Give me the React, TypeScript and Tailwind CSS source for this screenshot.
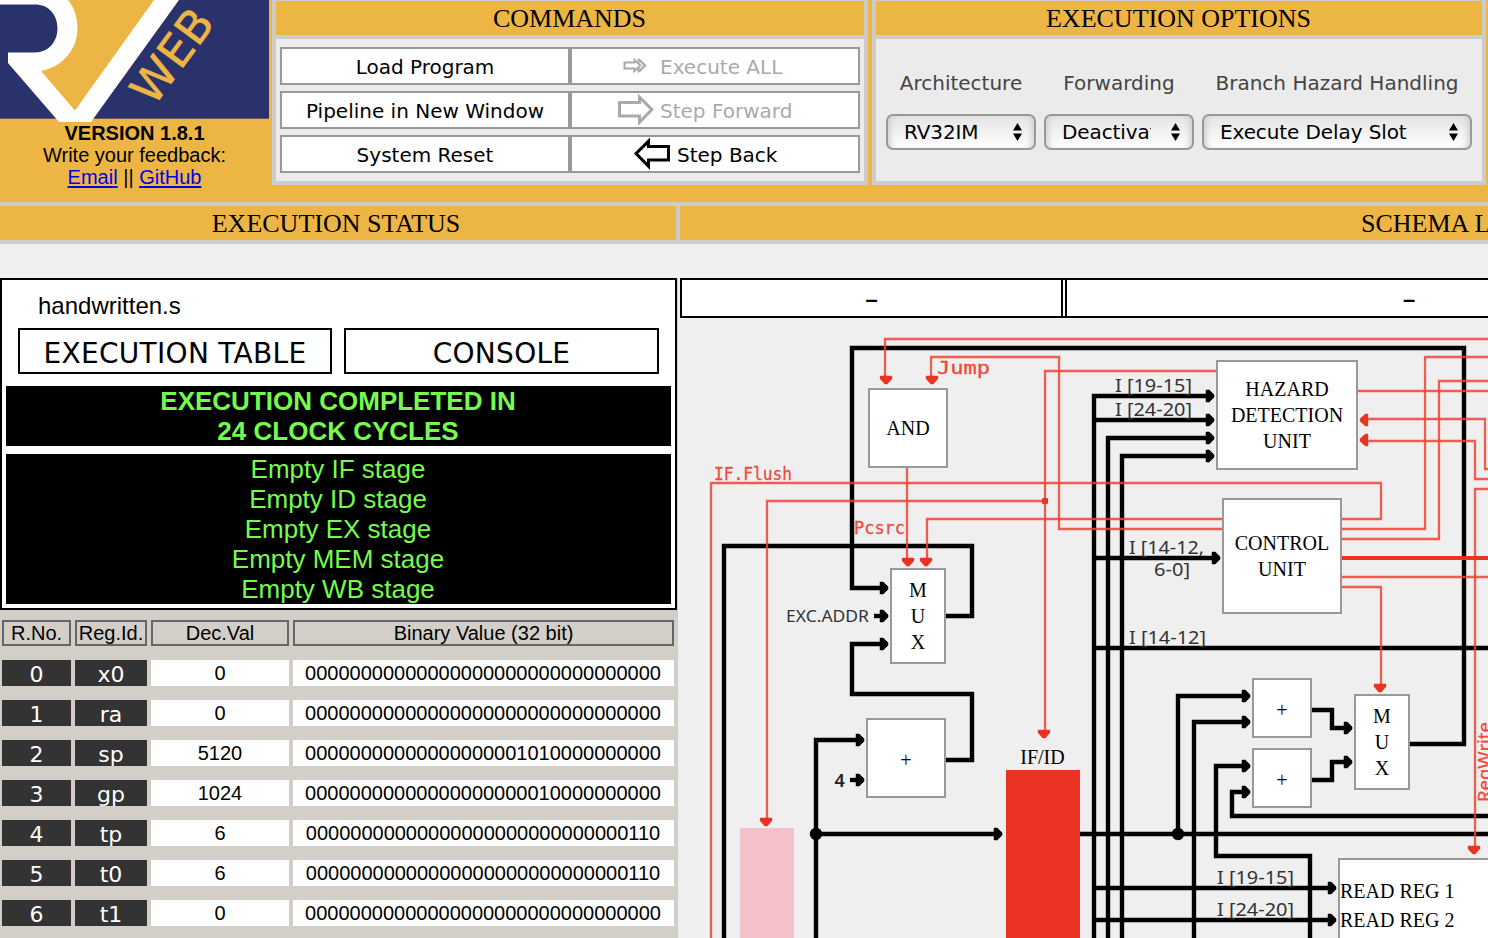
import React from "react";

const VERDANA = "font-['DejaVu_Sans',sans-serif]";
const TIMES = "font-['Liberation_Serif',serif]";

function Logo() {
  return (
    <svg width="270" height="122" viewBox="0 0 270 122" className="block shrink-0">
      <rect x="0" y="0" width="269" height="118.7" fill="#2a326c" />
      <path
        d="M0 0 H179 L91 122 H59 L8 63 V52.500 H35 C49 52.500 57.500 41 57.500 28.500 C57.500 15 49 4.500 35 4.500 H0 Z"
        fill="#fff"
      />
      <path d="M68 0 H154 L75 110.500 L41 71 C62 67 77.500 50 77.500 28 C77.500 17 74 7 68 0 Z" fill="#edb544" />
      <text
        transform="translate(153.500 107.500) rotate(-53.500)"
        fontFamily="DejaVu Sans, sans-serif"
        fontSize="45"
        textLength="105"
        lengthAdjust="spacingAndGlyphs"
        fill="#edb544"
        stroke="#edb544"
        strokeWidth="0.500"
      >
        WEB
      </text>
    </svg>
  );
}

function ArrowOutline({ className }: { className?: string }) {
  return (
    <svg width="37" height="34" viewBox="0 0 37 34" className={`shrink-0 ${className ?? ""}`} fill="currentColor" fillRule="evenodd">
      <path d="M1 8 H21 V0.500 L37 16.500 L21 33 V24.500 H1 Z M4 11 V21.500 H24 V25.500 L32.800 16.500 L24 8 V11 Z" />
    </svg>
  );
}

function ArrowDouble() {
  return (
    <svg width="24" height="16" viewBox="0 0 24 16" className="shrink-0" fill="none" stroke="currentColor" strokeWidth="2">
      <path d="M1.500 4.500 H11.500 V2 L17.500 7.500 L11.500 13 V10.500 H1.500 Z" />
      <path d="M16 1.500 L22 7.500 L16 13.500" strokeWidth="2.400" />
      <path d="M15.500 0.500 V5 M15.500 10 V14.500" strokeWidth="2" />
    </svg>
  );
}

function CommandButton({ children, icon, className }: { children: React.ReactNode; icon?: React.ReactNode; className: string }) {
  return (
    <button className={`flex h-[38px] w-[290px] items-center whitespace-nowrap border-2 border-[#999] bg-white text-[20px] ${VERDANA} ${className}`}>
      {icon}
      <span className="pt-[2px]">{children}</span>
    </button>
  );
}

function PanelTitle({ children }: { children: React.ReactNode }) {
  return (
    <div className={`h-[38px] border-b-4 border-[#ccc] bg-[#edb544] pr-[1px] text-center text-[26px] leading-[36px] ${TIMES}`}>
      {children}
    </div>
  );
}

function OptionSelect({ label, value, width }: { label: string; value: string; width: string }) {
  return (
    <div className={`flex flex-col items-center ${width}`}>
      <span className="whitespace-nowrap text-[20px] leading-[24px] text-[#444]">{label}</span>
      <div className="mt-[19px] flex h-[36px] w-full items-center justify-between rounded-[7px] border-2 border-[#999] bg-linear-to-b from-[#e4e4e4] to-white pl-[16px] pr-[12px] shadow-[inset_6px_0_6px_-4px_#ccc,inset_-6px_0_6px_-4px_#ccc]">
        <span className="min-w-0 flex-1 overflow-hidden whitespace-nowrap text-[20px] leading-[32px] tracking-[-0.1px]">{value}</span>
        <svg width="9" height="18" viewBox="0 0 9 18" className="ml-[20px] shrink-0">
          <path d="M0 7.500 L4.500 0 L9 7.500 Z M0 10.500 L4.500 18 L9 10.500 Z" />
        </svg>
      </div>
    </div>
  );
}

const registers = [
  ["0", "x0", "0", "00000000000000000000000000000000"],
  ["1", "ra", "0", "00000000000000000000000000000000"],
  ["2", "sp", "5120", "00000000000000000001010000000000"],
  ["3", "gp", "1024", "00000000000000000000010000000000"],
  ["4", "tp", "6", "00000000000000000000000000000110"],
  ["5", "t0", "6", "00000000000000000000000000000110"],
  ["6", "t1", "0", "00000000000000000000000000000000"],
];

// Data path wires, in page coordinates; the viewBox starts at 680, 318.
const dataWires = [
  "M1410 744 H1464 V348 H852 V588 H882",
  "M724 940 V546 H972 V616 H946",
  "M874 616 H882",
  "M946 760 H972 V694 H852 V644 H882",
  "M816 940 V740 H858",
  "M850 780 H858",
  "M816 834 H996",
  "M1080 834 H1490",
  "M1094 940 V396 H1208",
  "M1094 420 H1208",
  "M1108 940 V438 H1208",
  "M1122 940 V456 H1208",
  "M1094 558 H1214",
  "M1094 648 H1490",
  "M1094 888 H1330",
  "M1094 920 H1330",
  "M1178 834 V696 H1244",
  "M1194 940 V722 H1244",
  "M1310 940 V856 H1216 V766 H1244",
  "M1490 816 H1232 V792 H1244",
  "M1312 710 H1332 V728 H1346",
  "M1312 780 H1332 V762 H1346",
];

const dataHeads = [
  [888, 588], [888, 616], [888, 644], [864, 740], [864, 780], [1002, 834],
  [1214, 396], [1214, 420], [1214, 438], [1214, 456], [1220, 558],
  [1336, 888], [1336, 920], [1250, 696], [1250, 722], [1250, 766], [1250, 792],
  [1352, 728], [1352, 762],
];

const controlWires = [
  "M1490 339 H885 V378",
  "M1222 529 H1059 V357 H931 V378",
  "M1216 371 H1045 V732",
  "M1045 501 H767 V820",
  "M711 940 V483 H1381 V519 H1342",
  "M907 468 V560",
  "M1222 519 H927 V560",
  "M1342 529 H1425 V357 H1490",
  "M1342 539 H1439 V381 H1490",
  "M1342 577 H1490",
  "M1342 587 H1381 V686",
  "M1358 391 H1490",
  "M1366 419 H1485 V469 H1490",
  "M1366 441 H1475 V479 H1490",
  "M1490 489 H1475 V848",
];

const controlHeads = [
  [886, 384], [932, 384], [1044, 738], [766, 826], [908, 566], [926, 566], [1380, 692], [1474, 854],
];

const wireLabels: [string, number, number, number, number][] = [
  ["I [19-15]", 1115, 391.5, 77, 18],
  ["I [24-20]", 1115, 415.5, 77, 18],
  ["I [14-12,", 1129, 553.5, 75, 18],
  ["6-0]", 1154, 576, 36, 18],
  ["I [14-12]", 1129, 643.5, 77, 18],
  ["I [19-15]", 1217, 883.5, 77, 18],
  ["I [24-20]", 1217, 915.5, 77, 18],
  ["EXC.ADDR", 786, 622, 83, 17],
];

function Wires() {
  return (
    <svg width="808" height="620" viewBox="680 318 808 620" className="absolute left-0 top-0">
      <g fill="none" stroke="#000" strokeWidth="4.400">
        {dataWires.map((d) => (
          <path key={d} d={d} />
        ))}
      </g>
      {dataHeads.map(([x, y]) => (
        <path key={`${x}-${y}`} transform={`translate(${x} ${y})`} d="M-7.500 -5.500 H-5 L-0.500 -1 V1 L-5 5.500 H-7.500 Z" stroke="#000" strokeWidth="1.500" strokeLinejoin="round" />
      ))}
      <circle cx="816" cy="834" r="6.200" />
      <circle cx="1178" cy="834" r="6.200" />
      <g fontFamily="Noto Sans, sans-serif" fill="#333">
        {wireLabels.map(([t, x, y, w, s]) => (
          <text key={`${x}-${y}`} x={x} y={y} fontSize={s} textLength={w} lengthAdjust="spacingAndGlyphs">
            {t}
          </text>
        ))}
        <text x="834.500" y="787" fontSize="18" fontWeight="600" fill="#222">4</text>
      </g>
      <g fill="none" stroke="#ee4335" strokeOpacity=".85" strokeWidth="2.300">
        {controlWires.map((d) => (
          <path key={d} d={d} />
        ))}
      </g>
      <path d="M1342 558 H1490" stroke="#ea3323" strokeWidth="4" />
      <rect x="1042" y="498" width="6" height="6" rx="1" fill="#ea3323" />
      <g fill="#ea3323" stroke="#ea3323" strokeWidth="1.300" strokeLinejoin="round">
        {controlHeads.map(([x, y]) => (
          <path key={`${x}-${y}`} transform={`translate(${x} ${y})`} d="M-5.500 -7.500 H5.500 V-5.500 L1 -0.500 H-1 L-5.500 -5.500 Z" />
        ))}
        <path d="M1367.500 414.500 V425.500 H1365.500 L1360.500 421 V419 L1365.500 414.500 Z" />
        <path d="M1367.500 434.500 V445.500 H1365.500 L1360.500 441 V439 L1365.500 434.500 Z" />
      </g>
      <g fontFamily="DejaVu Sans Mono, monospace" fontSize="18.500" fill="#ee4a3d" stroke="#ee4a3d" strokeWidth="0.300">
        <text x="937" y="374" textLength="53" lengthAdjust="spacingAndGlyphs">Jump</text>
        <text x="714" y="480" textLength="78" lengthAdjust="spacingAndGlyphs">IF.Flush</text>
        <text x="854" y="534" textLength="51" lengthAdjust="spacingAndGlyphs">Pcsrc</text>
        <text transform="translate(1491 802) rotate(-90)" fontFamily="Noto Sans, sans-serif" fontSize="18" textLength="80" lengthAdjust="spacingAndGlyphs">
          RegWrite
        </text>
      </g>
    </svg>
  );
}

function Unit({ children, className }: { children: React.ReactNode; className: string }) {
  return (
    <div className={`absolute flex flex-col items-center justify-center border-2 border-[#999] bg-white text-center text-[20px] leading-[26px] ${className}`}>
      {children}
    </div>
  );
}

function Schema() {
  return (
    <div className={`relative h-[620px] w-[808px] overflow-hidden ${TIMES}`}>
      <Wires />
      <Unit className="left-[188px] top-[70px] h-[80px] w-[80px]">AND</Unit>
      <Unit className="left-[210px] top-[250px] h-[96px] w-[56px]">
        <span>M</span>
        <span>U</span>
        <span>X</span>
      </Unit>
      <Unit className="left-[186px] top-[400px] h-[80px] w-[80px] pt-[3px]">+</Unit>
      <Unit className="left-[536px] top-[42px] h-[110px] w-[142px]">
        <span>HAZARD</span>
        <span>DETECTION</span>
        <span>UNIT</span>
      </Unit>
      <Unit className="left-[542px] top-[180px] h-[116px] w-[120px]">
        <span>CONTROL</span>
        <span>UNIT</span>
      </Unit>
      <Unit className="left-[572px] top-[360px] h-[60px] w-[60px] pt-[3px]">+</Unit>
      <Unit className="left-[572px] top-[430px] h-[60px] w-[60px] pt-[3px]">+</Unit>
      <Unit className="left-[674px] top-[376px] h-[96px] w-[56px]">
        <span>M</span>
        <span>U</span>
        <span>X</span>
      </Unit>
      <div className="absolute left-[658px] top-[540px] h-[90px] w-[160px] border-2 border-[#999] bg-white pt-[17px] text-[20px] leading-[29px]">
        <p>READ REG 1</p>
        <p>READ REG 2</p>
      </div>
      <div className="absolute left-[60px] top-[510px] h-[110px] w-[54px] bg-[#f5c1cb]" />
      <div className="absolute left-[326px] top-[452px] h-[168px] w-[74px] bg-[#ea3323]" />
      <div className="absolute left-[326px] top-[426px] w-[73px] text-center text-[20px] leading-[26px]">IF/ID</div>
    </div>
  );
}

export default function App() {
  return (
    <div className="flex h-[938px] w-[1488px] flex-col overflow-hidden bg-[#efefef] font-['Liberation_Sans',Arial,sans-serif] text-black">
      <header className="flex h-[202px] shrink-0 bg-[#edb544]">
        <div className="w-[272px] shrink-0">
          <Logo />
          <div className="w-[269px] text-center text-[20px] leading-[22px]">
            <p className="font-bold">VERSION 1.8.1</p>
            <p>Write your feedback:</p>
            <p>
              <a className="text-[#0000ee] underline decoration-2 underline-offset-2">Email</a> || <a className="text-[#0000ee] underline decoration-2 underline-offset-2">GitHub</a>
            </p>
          </div>
        </div>
        <section className="h-[185px] w-[596px] shrink-0 border-4 border-t border-[#ccc] bg-[#ebebeb]">
          <PanelTitle>COMMANDS</PanelTitle>
          <div className="grid grid-cols-2 gap-y-[6px] px-[4px] pt-[8px]">
            <CommandButton className="justify-center">Load Program</CommandButton>
            <CommandButton className="gap-[13px] pl-[51px] text-[#aaa]" icon={<ArrowDouble />}>
              Execute ALL
            </CommandButton>
            <CommandButton className="justify-center">Pipeline in New Window</CommandButton>
            <CommandButton className="gap-[6px] pl-[45px] text-[#aaa]" icon={<ArrowOutline />}>
              Step Forward
            </CommandButton>
            <CommandButton className="justify-center">System Reset</CommandButton>
            <CommandButton className="gap-[6px] pl-[62px]" icon={<ArrowOutline className="-scale-x-100" />}>
              Step Back
            </CommandButton>
          </div>
        </section>
        <section className="ml-[4px] h-[185px] w-[614px] shrink-0 border-4 border-t border-[#ccc] bg-[#ebebeb]">
          <PanelTitle>EXECUTION OPTIONS</PanelTitle>
          <div className={`flex gap-[8px] pl-[10px] pt-[32px] ${VERDANA}`}>
            <OptionSelect label="Architecture" value="RV32IM" width="w-[150px]" />
            <OptionSelect label="Forwarding" value="Deactivated" width="w-[150px]" />
            <OptionSelect label="Branch Hazard Handling" value="Execute Delay Slot" width="w-[270px]" />
          </div>
        </section>
      </header>

      <div className={`flex h-[42px] shrink-0 border-y-4 border-[#ccc] bg-[#edb544] text-[26px] leading-[35px] ${TIMES}`}>
        <div className="w-[680px] shrink-0 border-r-4 border-[#ccc] pr-[4px] text-center">EXECUTION STATUS</div>
        <div className="flex-1 overflow-hidden whitespace-nowrap pl-[681px]">SCHEMA L</div>
      </div>

      <main className="flex min-h-0 flex-1 pt-[34px]">
        <div className="mr-[2px] w-[678px] shrink-0 bg-[#d3cfc8]">
          <div className="h-[332px] w-[677px] border-2 border-black bg-white">
            <p className="pl-[36px] pt-[12px] text-[24px] leading-[28px]">handwritten.s</p>
            <div className={`mt-[8px] flex gap-[12px] pl-[16px] text-[28px] ${VERDANA}`}>
              <button className="h-[46px] w-[314px] whitespace-nowrap border-2 border-black pt-[3px] tracking-[0.3px]">EXECUTION TABLE</button>
              <button className="h-[46px] w-[315px] border-2 border-black pt-[3px] tracking-[0.3px]">CONSOLE</button>
            </div>
            <div className="ml-[4px] mt-[12px] h-[60px] w-[665px] bg-black pr-[1px] text-center text-[26px] font-bold leading-[30px] text-[#75fb4c]">
              <p>EXECUTION COMPLETED IN</p>
              <p>24 CLOCK CYCLES</p>
            </div>
            <div className="ml-[4px] mt-[8px] h-[150px] w-[665px] bg-black pr-[1px] text-center text-[26px] leading-[30px] text-[#75fb4c]">
              <p>Empty IF stage</p>
              <p>Empty ID stage</p>
              <p>Empty EX stage</p>
              <p>Empty MEM stage</p>
              <p>Empty WB stage</p>
            </div>
          </div>
          <div className="grid grid-cols-[69px_72px_138px_381px] gap-x-[4px] gap-y-[14px] pl-[2px] pt-[10px] text-center text-[20px] leading-[26px]">
            {["R.No.", "Reg.Id.", "Dec.Val", "Binary Value (32 bit)"].map((h) => (
              <div key={h} className="h-[26px] whitespace-nowrap border-2 border-[#666] leading-[22px]">
                {h}
              </div>
            ))}
            {registers.map(([no, id, dec, bin]) => (
              <React.Fragment key={no}>
                <div className={`h-[26px] overflow-hidden bg-[#333] text-[22px] leading-[29px] text-white ${VERDANA}`}>{no}</div>
                <div className={`h-[26px] overflow-hidden bg-[#333] text-[22px] leading-[29px] text-white ${VERDANA}`}>{id}</div>
                <div className="h-[26px] bg-white">{dec}</div>
                <div className="h-[26px] bg-white pr-[1px]">{bin}</div>
              </React.Fragment>
            ))}
          </div>
        </div>
        <div className="w-[808px] shrink-0 overflow-hidden">
          <div className="flex h-[40px] text-[22px] font-bold leading-[39px]">
            <div className="w-[383px] shrink-0 border-2 border-black bg-white text-center">–</div>
            <div className="w-[2px] shrink-0 border-y-2 border-black bg-white" />
            <div className="w-[688px] shrink-0 border-2 border-black bg-white text-center">–</div>
          </div>
          <Schema />
        </div>
      </main>
    </div>
  );
}
